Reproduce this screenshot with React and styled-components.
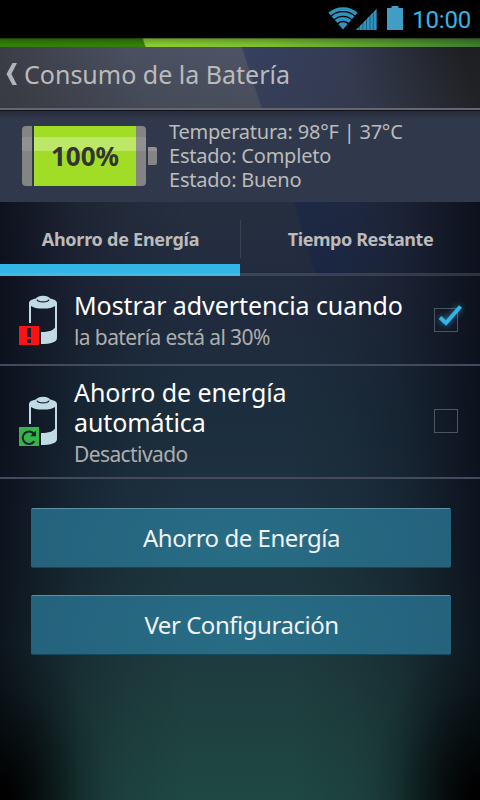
import React from 'react';
import styled, { createGlobalStyle } from 'styled-components'

const GlobalStyle = createGlobalStyle`
  body {
    margin: 0;
    background: #000;
  }
`

const Screen = styled.div`
  width: 480px;
  height: 800px;
  box-sizing: border-box;
  overflow: hidden;
  display: flex;
  flex-direction: column;
  font-family: 'Noto Sans', 'Open Sans', sans-serif;
  background:
    radial-gradient(ellipse 110px 160px at 0 100%, rgba(0, 0, 0, 0.95) 10%, rgba(0, 0, 0, 0.5) 45%, rgba(0, 0, 0, 0.15) 75%, transparent),
    radial-gradient(ellipse 110px 160px at 100% 100%, rgba(0, 0, 0, 0.95) 10%, rgba(0, 0, 0, 0.5) 45%, rgba(0, 0, 0, 0.15) 75%, transparent),
    linear-gradient(90deg, rgba(4, 4, 14, 0.68) 0, rgba(4, 4, 14, 0.45) 40px, rgba(4, 4, 14, 0.24) 80px, rgba(4, 4, 14, 0.09) 130px, transparent 190px, transparent 290px, rgba(4, 4, 14, 0.09) 350px, rgba(4, 4, 14, 0.24) 400px, rgba(4, 4, 14, 0.45) 440px, rgba(4, 4, 14, 0.68) 480px),
    linear-gradient(180deg, #262f40 200px, #202b3e 300px, #1c2e3d 410px, #1e3140 500px, #1d353e 580px, #1e3d3f 680px, #1f4842 800px);
`

const StatusBar = styled.div`
  height: 38px;
  flex: none;
  box-sizing: border-box;
  padding: 0 9px 2px 328px;
  display: flex;
  align-items: center;
  background: #000;
`

const Clock = styled.span`
  margin-left: auto;
  padding-top: 4px;
  font-family: Roboto, sans-serif;
  font-size: 24px;
  line-height: 34px;
  letter-spacing: -0.2px;
  color: #33b5e5;
`

const Accent = styled.div`
  height: 9px;
  flex: none;
  background:
    linear-gradient(180deg, rgba(0, 0, 0, 0.75) 0, rgba(0, 0, 0, 0.22) 1px, transparent 7px),
    linear-gradient(72deg, #338008 30%, #8acd32 30.3%, #7cbf30 55%, #3d7b2d 100%);
`

const TitleBar = styled.div`
  height: 64px;
  flex: none;
  box-sizing: border-box;
  padding: 0 0 9px 6px;
  display: flex;
  align-items: center;
  gap: 7px;
  border-bottom: 1px solid #10131b;
  box-shadow: inset 0 -2px #64676f;
  background:
    linear-gradient(180deg, transparent, rgba(50, 50, 50, 0.2)),
    linear-gradient(72deg, #3b3d46 3%, #4a5061 30%, #4e5466 52.2%, #364060 52.6%, #343c54 72%, #1e1f22 96%);
`

const Label = styled.span`
  display: block;
  white-space: pre-line;
  font-size: ${({size}) => size}px;
  line-height: ${({line}) => line}px;
  letter-spacing: ${({track}) => track || 0}px;
  font-weight: ${({bold}) => bold ? 700 : 400};
  color: ${({tone}) => tone || '#bbbbbb'};
`

const InfoPanel = styled.div`
  height: 91px;
  flex: none;
  box-sizing: border-box;
  padding: 0 0 2px 22px;
  display: flex;
  align-items: center;
  gap: 12px;
  background: linear-gradient(180deg, #252b39 0, #30394b 8px);
`

const Battery = styled.div`
  display: flex;
  align-items: center;
  gap: 2px;
`

const Cell = styled.div`
  display: flex;
  width: 124px;
  height: 60px;
  border-radius: 4px;
  overflow: hidden;
  position: relative;

  &::after {
    content: '';
    position: absolute;
    left: 0;
    right: 0;
    top: 11px;
    height: 14px;
    background: linear-gradient(90deg, rgba(255, 255, 255, 0.1) 10px, transparent 10px, transparent 12px, rgba(255, 255, 255, 0.3) 12px, rgba(255, 255, 255, 0.3) 114px, rgba(255, 255, 255, 0.1) 114px);
  }
`

const Cap = styled.div`
  width: 10px;
  background: #848484;
`

const Charge = styled.div`
  width: 102px;
  margin-left: 2px;
  display: flex;
  align-items: center;
  justify-content: center;
  background: #a1dd26;

  span {
    position: relative;
    z-index: 1;
  }
`

const Nub = styled.div`
  width: 9px;
  height: 18px;
  border-radius: 0 2px 2px 0;
  background: linear-gradient(180deg, #929292 4px, #848484 4px);
`

const TabBar = styled.div`
  height: 74px;
  flex: none;
  display: flex;
  background: linear-gradient(73deg, transparent 62.6%, rgba(18, 32, 78, 0.4) 63.2%, rgba(18, 32, 66, 0.2) 80%, rgba(8, 10, 20, 0.2) 100%);
`

const Tab = styled.div`
  width: 240px;
  box-sizing: border-box;
  border-bottom: 3px solid ${({active}) => active ? '#4ab7dd' : 'rgba(110, 110, 120, 0.36)'};
  box-shadow: ${({active}) => active ? 'inset 0 -9px #33b5e5' : 'none'};
  display: flex;
  justify-content: center;
  padding: 17px 0 0 1px;

  & + & {
    background: linear-gradient(#3a4150, #3a4150) 0 18px / 1px 38px no-repeat;
  }
`

const Row = styled.div`
  height: ${({tall}) => tall ? 113 : 90}px;
  flex: none;
  box-sizing: border-box;
  padding: 0 22px ${({tall}) => tall ? 1 : 0}px 19px;
  border-bottom: 2px solid #434a5e;
  display: flex;
  align-items: center;
`

const RowText = styled.div`
  flex: 1;
  padding: ${({tall}) => tall ? 7 : 5}px 0 0 17px;
`

const Box = styled.div`
  width: 24px;
  height: 24px;
  box-sizing: border-box;
  border: 1px solid #4c5460;
  position: relative;

  svg {
    position: absolute;
    left: -1px;
    top: -7px;
    overflow: visible;
    filter: drop-shadow(0 0 3px rgba(51, 181, 229, 0.7));
  }
`

const Buttons = styled.div`
  display: flex;
  flex-direction: column;
  gap: 27px;
  padding: 29px 29px 0 31px;
`

const Button = styled.button`
  height: 60px;
  padding: 0 0 0 1px;
  border: 0;
  border-top: 1px solid #5a93a8;
  border-bottom: 1px solid #12475c;
  border-radius: 2px;
  background: radial-gradient(ellipse 260px 120px at 50% 60%, #286d85, #24607b);
  font-family: inherit;
  display: flex;
  align-items: center;
  justify-content: center;
`

const WifiIcon = () => (
  <svg width="30" height="24" viewBox="0 0 30 24">
    <clipPath id="wedge">
      <path d="M15 23.5L-1.5 4.5V0h33v4.5z" />
    </clipPath>
    <g clipPath="url(#wedge)" fill="none" stroke="#2f93bf" strokeWidth="3.7">
      <circle cx="15" cy="23.5" r="20.4" />
      <circle cx="15" cy="23.5" r="15.5" />
      <circle cx="15" cy="23.5" r="10.7" />
      <circle cx="15" cy="23.5" r="3.6" strokeWidth="7.2" />
    </g>
  </svg>
)

const SignalIcon = () => (
  <svg width="21" height="24" viewBox="0 -1 21 24" style={{marginLeft: -2}}>
    <path d="M0 23L20.5 2v21z" fill="#1c6180" />
    <path d="M0 23l2.7-2.7V23zM3.8 23v-3.9l2.6-2.7V23zM7.4 23v-7.6l2.6-2.7V23zM11 23V11.7l2.5-2.6V23zM14.5 23V8.1l2.3-2.3V23zM17.8 23V4.8L20.5 2v21z" fill="#2f93bf" />
  </svg>
)

const StatusBattery = () => (
  <svg width="16" height="24" viewBox="0 0 16 24" style={{marginLeft: 10}}>
    <path d="M4.5 0h7v2H16v22H0V2h4.5z" fill="#429dc5" />
  </svg>
)

const BackArrow = () => (
  <svg width="11" height="22" viewBox="0 0 11 22">
    <path d="M6.5 0H11L5.4 11 11 22H6.5L.5 11z" fill="#b1b3b7" />
  </svg>
)

const CellIcon = ({children}) => (
  <svg width="38" height="50" viewBox="0 0 38 50">
    <path d="M10 28V8c0-3 5-5 14-5s14 2 14 5v35c0 4-6 6-16 6V37c8 0 12-1.5 14-4.5V11c-2 1.7-6 2.6-12 2.6S14 12.7 12 11v17z" fill="#c1dae6" />
    <ellipse cx="24" cy="3.7" rx="7" ry="2.9" fill="#c1dae6" />
    <path d="M18 4.6c1 3 11 3 12 0" fill="none" stroke="#1b2737" strokeWidth="1.3" />
    {children}
  </svg>
)

const WarnBadge = () => (
  <>
    <path d="M0 31h20v19H0z" fill="#f81414" />
    <path d="M8 33h4v9H8zM8 44h4v4H8z" fill="#1b1d2b" />
  </>
)

const AutoBadge = () => (
  <>
    <path d="M0 31h20v19H0z" fill="#35b44a" />
    <path d="M15.3 45.2a6.3 6.3 0 1 1-.6-7.7" fill="none" stroke="#16252c" strokeWidth="2.1" />
    <path d="M17 34.5v5.7h-5.700z" fill="#16252c" />
  </>
)

const Check = () => (
  <svg width="30" height="26" viewBox="0 0 30 26">
    <path d="M6 15.5l6 5.5L26.5 4.5" fill="none" stroke="#33b5e5" strokeWidth="4" />
  </svg>
)

const settings = [
  {title: "Mostrar advertencia cuando", detail: "la batería está al 30%", badge: <WarnBadge />, checked: true},
  {title: "Ahorro de energía\nautomática", detail: "Desactivado", badge: <AutoBadge />, tall: true},
]

const tabs = [
  {text: "Ahorro de Energía", track: -0.25},
  {text: "Tiempo Restante", track: -0.42},
]

const actions = ["Ahorro de Energía", "Ver Configuración"]

const Setting = ({title, detail, badge, checked, tall}) => {
  return (
    <Row tall={tall}>
      <CellIcon>{badge}</CellIcon>
      <RowText tall={tall}>
        <Label size={25} line={30} track={-0.08} tone="#fff">{title}</Label>
        <Label size={21} line={35} track={-0.6} tone="#adaeb0">{detail}</Label>
      </RowText>
      <Box>{checked && <Check />}</Box>
    </Row>
  )
}

const App = () => {
  return (
    <>
      <GlobalStyle />
      <Screen>
        <StatusBar>
          <WifiIcon />
          <SignalIcon />
          <StatusBattery />
          <Clock>10:00</Clock>
        </StatusBar>
        <Accent />
        <TitleBar>
          <BackArrow />
          <Label size={25} line={34}>Consumo de la Batería</Label>
        </TitleBar>
        <InfoPanel>
          <Battery>
            <Cell>
              <Cap />
              <Charge><Label size={26} line={30} bold tone="#333">100%</Label></Charge>
              <Cap />
            </Cell>
            <Nub />
          </Battery>
          <Label size={20} line={24} track={-0.22}>{"Temperatura: 98°F | 37°C\nEstado: Completo\nEstado: Bueno"}</Label>
        </InfoPanel>
        <TabBar>
          {tabs.map(({text, track}, i) => (
            <Tab active={i === 0} key={i}>
              <Label size={18} line={40} track={track} bold>{text}</Label>
            </Tab>
          ))}
        </TabBar>
        {settings.map((item, i) => <Setting {...item} key={i} />)}
        <Buttons>
          {actions.map((text, i) => (
            <Button key={i}><Label size={24} line={30} track={-0.47} tone="#f0f2f3">{text}</Label></Button>
          ))}
        </Buttons>
      </Screen>
    </>
  )
}

export default App
